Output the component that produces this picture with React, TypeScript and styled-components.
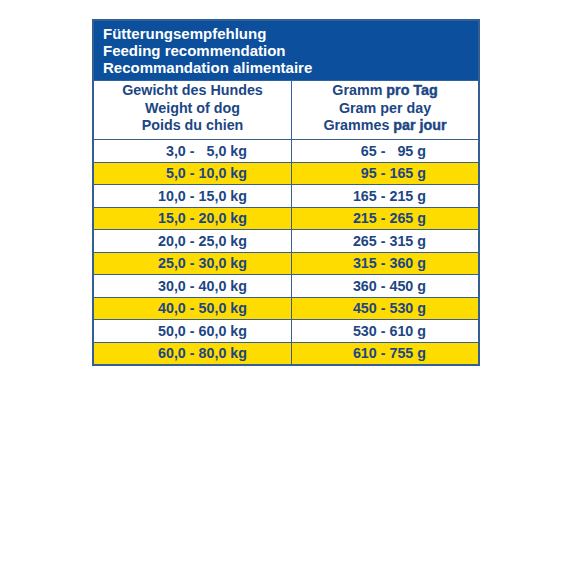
import React from 'react';
import styled, { createGlobalStyle } from 'styled-components';

const GlobalStyle = createGlobalStyle`
  html, body {
    margin: 0;
    padding: 0;
    background: #ffffff;
  }
  body {
    font-family: "Liberation Sans", Arial, sans-serif;
  }
`;

const rows: [string, string][] = [
  ['3,0 -   5,0 kg', '65 -   95 g'],
  ['5,0 - 10,0 kg', '95 - 165 g'],
  ['10,0 - 15,0 kg', '165 - 215 g'],
  ['15,0 - 20,0 kg', '215 - 265 g'],
  ['20,0 - 25,0 kg', '265 - 315 g'],
  ['25,0 - 30,0 kg', '315 - 360 g'],
  ['30,0 - 40,0 kg', '360 - 450 g'],
  ['40,0 - 50,0 kg', '450 - 530 g'],
  ['50,0 - 60,0 kg', '530 - 610 g'],
  ['60,0 - 80,0 kg', '610 - 755 g'],
];

const App = () => {
  return (
    <Page>
      <GlobalStyle />
      <Table>
        <TitleBar>
          <div>Fütterungsempfehlung</div>
          <div>Feeding recommendation</div>
          <div>Recommandation alimentaire</div>
        </TitleBar>
        <Row>
          <HeadCell>
            <div>Gewicht des Hundes</div>
            <div>Weight of dog</div>
            <div>Poids du chien</div>
          </HeadCell>
          <HeadCell $divider>
            <div>
              Gramm <Heavy>pro Tag</Heavy>
            </div>
            <div>Gram per day</div>
            <div>
              Grammes <Heavy>par jour</Heavy>
            </div>
          </HeadCell>
        </Row>
        {rows.map(([weight, grams], i) => (
          <DataRow key={weight} $yellow={i % 2 === 1}>
            <DataCell $pad={44}>{weight}</DataCell>
            <DataCell $pad={52} $divider>
              {grams}
            </DataCell>
          </DataRow>
        ))}
      </Table>
    </Page>
  );
};

const Page = styled.div`
  padding: 19px 0 0 92px;
`;

const Table = styled.div`
  width: 388px;
  box-sizing: border-box;
  border: 2px solid #345f93;
  display: flex;
  flex-direction: column;
  color: #1c4684;
  font-weight: bold;
`;

const TitleBar = styled.div`
  height: 59px;
  box-sizing: border-box;
  padding: 4px 0 0 9px;
  background: #0b4f9d;
  color: #ffffff;
  font-size: 15px;
  line-height: 17px;
`;

const Row = styled.div`
  display: grid;
  grid-template-columns: 197px 1fr;
  border-top: 1px solid #2f62a3;
`;

const HeadCell = styled.div<{ $divider?: boolean }>`
  height: 58px;
  box-sizing: border-box;
  padding-top: 1px;
  text-align: center;
  font-size: 14.3px;
  line-height: 17.5px;
  border-left: ${(p) => (p.$divider ? '1px solid #2f62a3' : 'none')};
`;

const Heavy = styled.span`
  -webkit-text-stroke: 0.4px #1c4684;
`;

const DataRow = styled(Row)<{ $yellow: boolean }>`
  height: 22.5px;
  box-sizing: border-box;
  background: ${(p) => (p.$yellow ? '#ffdc00' : '#ffffff')};
  border-top-color: #3b5f8c;
`;

const DataCell = styled.div<{ $pad: number; $divider?: boolean }>`
  display: flex;
  align-items: center;
  justify-content: flex-end;
  padding-right: ${(p) => p.$pad}px;
  white-space: pre;
  font-size: 14.3px;
  line-height: 1;
  border-left: ${(p) => (p.$divider ? '1px solid #3b5f8c' : 'none')};
`;

export default App;
